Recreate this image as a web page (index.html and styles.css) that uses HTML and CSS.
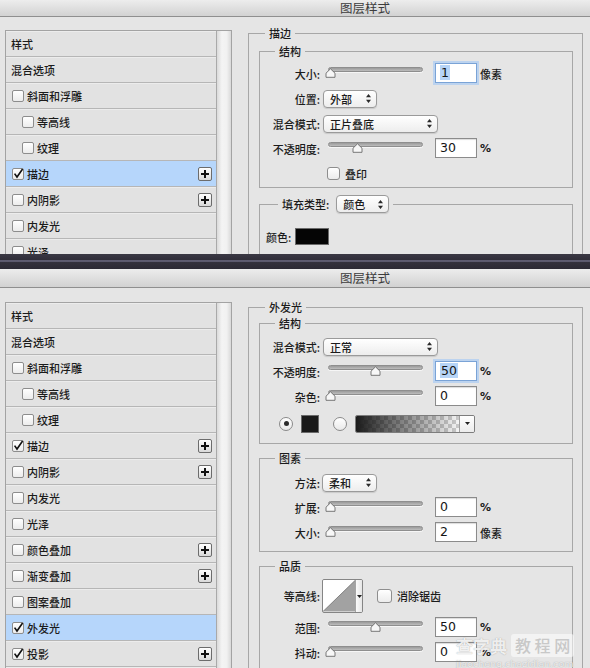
FILE: index.html
```html
<!DOCTYPE html>
<html lang="zh">
<head>
<meta charset="utf-8">
<title>图层样式</title>
<link rel="stylesheet" href="styles.css">
</head>
<body>
<div class="dialog d1">
  <div class="titlebar">图层样式</div>
  <div class="dbody">
    <div class="list">
      <div class="rows">
        <div class="row">样式</div>
        <div class="row">混合选项</div>
        <div class="row"><i class="cb"></i>斜面和浮雕</div>
        <div class="row sub"><i class="cb"></i>等高线</div>
        <div class="row sub"><i class="cb"></i>纹理</div>
        <div class="row active"><i class="cb on"><svg viewBox="0 0 12 12"><path d="M2.6 5.6l2.4 3.4L10.6 1"/></svg></i>描边<i class="plus"><svg viewBox="0 0 12 12"><path d="M6 2v8M2 6h8"/></svg></i></div>
        <div class="row"><i class="cb"></i>内阴影<i class="plus"><svg viewBox="0 0 12 12"><path d="M6 2v8M2 6h8"/></svg></i></div>
        <div class="row"><i class="cb"></i>内发光</div>
        <div class="row"><i class="cb"></i>光泽</div>
      </div>
      <div class="track"></div>
    </div>
    <div class="panel p1">
      <fieldset class="grp outer">
        <legend>描边</legend>
        <fieldset class="grp inner">
          <legend>结构</legend>
          <div class="fbody fb-s1">
            <div class="frow">
              <span class="lbl">大小:</span>
              <div class="slider"><div class="trk"></div><svg class="thumb" style="left:-0.5px" viewBox="0 0 11 10"><path d="M1 9.3V5.2L5.5 0.8L10 5.2V9.3Z"/></svg></div>
              <span class="num focus"><span class="hl">1</span></span>
              <span class="unit">像素</span>
            </div>
            <div class="frow">
              <span class="lbl">位置:</span>
              <span class="sel w54"><span>外部</span><svg class="arr" viewBox="0 0 5 9"><path d="M2.5 0L5 3.3H0zM2.5 9L5 5.7H0z"/></svg></span>
            </div>
            <div class="frow">
              <span class="lbl">混合模式:</span>
              <span class="sel w115"><span>正片叠底</span><svg class="arr" viewBox="0 0 5 9"><path d="M2.5 0L5 3.3H0zM2.5 9L5 5.7H0z"/></svg></span>
            </div>
            <div class="frow">
              <span class="lbl">不透明度:</span>
              <div class="slider"><div class="trk"></div><svg class="thumb" style="left:26.8px" viewBox="0 0 11 10"><path d="M1 9.3V5.2L5.5 0.8L10 5.2V9.3Z"/></svg></div>
              <span class="num">30</span>
              <span class="pct">%</span>
            </div>
            <div class="frow">
              <span class="lbl"></span>
              <i class="fcb"></i>
              <span class="cbl">叠印</span>
            </div>
          </div>
        </fieldset>
        <fieldset class="grp inner fill">
          <legend class="lsel"><span>填充类型:</span><span class="sel w53"><span>颜色</span><svg class="arr" viewBox="0 0 5 9"><path d="M2.5 0L5 3.3H0zM2.5 9L5 5.7H0z"/></svg></span></legend>
          <div class="fbody fb-fill">
            <div class="frow crow">
              <span>颜色:</span>
              <i class="swatch big"></i>
            </div>
          </div>
        </fieldset>
      </fieldset>
    </div>
  </div>
</div>

<div class="sep"></div>

<div class="dialog d2">
  <div class="titlebar">图层样式</div>
  <div class="dbody">
    <div class="list">
      <div class="rows">
        <div class="row">样式</div>
        <div class="row">混合选项</div>
        <div class="row"><i class="cb"></i>斜面和浮雕</div>
        <div class="row sub"><i class="cb"></i>等高线</div>
        <div class="row sub"><i class="cb"></i>纹理</div>
        <div class="row"><i class="cb on"><svg viewBox="0 0 12 12"><path d="M2.6 5.6l2.4 3.4L10.6 1"/></svg></i>描边<i class="plus"><svg viewBox="0 0 12 12"><path d="M6 2v8M2 6h8"/></svg></i></div>
        <div class="row"><i class="cb"></i>内阴影<i class="plus"><svg viewBox="0 0 12 12"><path d="M6 2v8M2 6h8"/></svg></i></div>
        <div class="row"><i class="cb"></i>内发光</div>
        <div class="row"><i class="cb"></i>光泽</div>
        <div class="row"><i class="cb"></i>颜色叠加<i class="plus"><svg viewBox="0 0 12 12"><path d="M6 2v8M2 6h8"/></svg></i></div>
        <div class="row"><i class="cb"></i>渐变叠加<i class="plus"><svg viewBox="0 0 12 12"><path d="M6 2v8M2 6h8"/></svg></i></div>
        <div class="row"><i class="cb"></i>图案叠加</div>
        <div class="row active"><i class="cb on"><svg viewBox="0 0 12 12"><path d="M2.6 5.6l2.4 3.4L10.6 1"/></svg></i>外发光</div>
        <div class="row"><i class="cb on"><svg viewBox="0 0 12 12"><path d="M2.6 5.6l2.4 3.4L10.6 1"/></svg></i>投影<i class="plus"><svg viewBox="0 0 12 12"><path d="M6 2v8M2 6h8"/></svg></i></div>
        <div class="row"></div>
      </div>
      <div class="track"></div>
    </div>
    <div class="panel p2">
      <fieldset class="grp outer">
        <legend>外发光</legend>
        <fieldset class="grp inner">
          <legend>结构</legend>
          <div class="fbody fb-s2">
            <div class="frow">
              <span class="lbl">混合模式:</span>
              <span class="sel w115"><span>正常</span><svg class="arr" viewBox="0 0 5 9"><path d="M2.5 0L5 3.3H0zM2.5 9L5 5.7H0z"/></svg></span>
            </div>
            <div class="frow">
              <span class="lbl">不透明度:</span>
              <div class="slider"><div class="trk"></div><svg class="thumb" style="left:45px" viewBox="0 0 11 10"><path d="M1 9.3V5.2L5.5 0.8L10 5.2V9.3Z"/></svg></div>
              <span class="num focus"><span class="hl">50</span></span>
              <span class="pct">%</span>
            </div>
            <div class="frow">
              <span class="lbl">杂色:</span>
              <div class="slider"><div class="trk"></div><svg class="thumb" style="left:-0.5px" viewBox="0 0 11 10"><path d="M1 9.3V5.2L5.5 0.8L10 5.2V9.3Z"/></svg></div>
              <span class="num">0</span>
              <span class="pct">%</span>
            </div>
            <div class="frow rrow">
              <i class="radio on"></i>
              <i class="swatch small"></i>
              <i class="radio r2"></i>
              <span class="grad"><span class="gfill"></span><span class="gdrop"><svg viewBox="0 0 5 3"><path d="M0 0h5L2.5 3z"/></svg></span></span>
            </div>
          </div>
        </fieldset>
        <fieldset class="grp inner gap6">
          <legend>图素</legend>
          <div class="fbody fb-e">
            <div class="frow">
              <span class="lbl">方法:</span>
              <span class="sel w55 m2"><span>柔和</span><svg class="arr" viewBox="0 0 5 9"><path d="M2.5 0L5 3.3H0zM2.5 9L5 5.7H0z"/></svg></span>
            </div>
            <div class="frow">
              <span class="lbl">扩展:</span>
              <div class="slider"><div class="trk"></div><svg class="thumb" style="left:-0.5px" viewBox="0 0 11 10"><path d="M1 9.3V5.2L5.5 0.8L10 5.2V9.3Z"/></svg></div>
              <span class="num">0</span>
              <span class="pct">%</span>
            </div>
            <div class="frow">
              <span class="lbl">大小:</span>
              <div class="slider"><div class="trk"></div><svg class="thumb" style="left:-0.5px" viewBox="0 0 11 10"><path d="M1 9.3V5.2L5.5 0.8L10 5.2V9.3Z"/></svg></div>
              <span class="num">2</span>
              <span class="unit">像素</span>
            </div>
          </div>
        </fieldset>
        <fieldset class="grp inner gap6 tall">
          <legend>品质</legend>
          <div class="fbody fb-q">
            <div class="frow krow">
              <span class="lbl">等高线:</span>
              <span class="contour">
                <svg class="cimg" viewBox="0 0 33 32"><rect width="33" height="32" fill="#fff"/><path d="M0 32L33 0V32Z" fill="#a2a2a2"/><path d="M0 32L33 0" stroke="#6d6d6d" stroke-width="0.8"/></svg>
                <span class="cdrop"><svg viewBox="0 0 5 3"><path d="M0 0h5L2.5 3z"/></svg></span>
              </span>
              <i class="fcb big"></i>
              <span class="cbl">消除锯齿</span>
            </div>
            <div class="frow">
              <span class="lbl">范围:</span>
              <div class="slider"><div class="trk"></div><svg class="thumb" style="left:45px" viewBox="0 0 11 10"><path d="M1 9.3V5.2L5.5 0.8L10 5.2V9.3Z"/></svg></div>
              <span class="num">50</span>
              <span class="pct">%</span>
            </div>
            <div class="frow">
              <span class="lbl">抖动:</span>
              <div class="slider"><div class="trk"></div><svg class="thumb" style="left:-0.5px" viewBox="0 0 11 10"><path d="M1 9.3V5.2L5.5 0.8L10 5.2V9.3Z"/></svg></div>
              <span class="num">0</span>
              <span class="pct">%</span>
            </div>
          </div>
        </fieldset>
      </fieldset>
    </div>
  </div>
</div>

<div class="watermark">
  <div class="wm-top"><span class="wm-a">查字典</span><span class="wm-b">教 程 网</span></div>
  <div class="wm-url">jiaocheng.chazidian.com</div>
</div>
</body>
</html>
```

FILE: styles.css
```css
* { box-sizing: border-box; margin: 0; padding: 0; }
html, body { width: 590px; height: 668px; overflow: hidden; }
body {
  position: relative;
  background: #e5e5e5;
  font-family: "Noto Sans CJK SC", "Noto Sans", sans-serif;
  font-size: 11px;
  font-weight: 500;
  color: #1b1b1b;
}
i { display: block; font-style: normal; }

.dialog { overflow: hidden; background: #e5e5e5; }
.d1 { height: 254px; }
.d2 { height: 399px; }
.d1 .titlebar { height: 17px; line-height: 15px; }

.sep {
  height: 15px;
  background: linear-gradient(#3a3844 0, #302e39 6px, #5f5d72 6px, #5b596d 8px, #34323d 8px, #2c2a34 100%);
}

.titlebar {
  height: 19px;
  border-bottom: 1px solid #8f8f8f;
  background: linear-gradient(#ededed, #d2d2d2);
  padding-left: 340px;
  font-size: 12.5px;
  font-weight: 400;
  line-height: 18px;
  color: #3c3c3c;
}

.dbody { display: flex; align-items: flex-start; }

/* left style list */
.list {
  display: flex;
  width: 227px;
  margin-left: 5px;
  border: 1px solid #a3a3a3;
  border-bottom: none;
}
.d1 .list { margin-top: 13px; }
.d2 .list { margin-top: 14px; }
.rows { width: 211px; border-right: 1px solid #a9a9a9; }
.track {
  flex: 1;
  background: linear-gradient(to right, #dadada, #f4f4f4 35%, #f1f1f1 70%, #d9d9d9);
}
.row {
  height: 26px;
  display: flex;
  align-items: center;
  padding-left: 5px;
  padding-right: 4px;
  background: #e2e2e2;
  border-bottom: 1px solid #b6b6b6;
  box-shadow: inset 0 1px 0 #ececec;
  white-space: nowrap;
}
.row.active { background: #b6d6fb; box-shadow: none; }
.row .cb { margin-left: 1px; }
.row.sub { padding-left: 15px; }

.cb {
  position: relative;
  width: 12px;
  height: 12px;
  margin-right: 3px;
  border: 1px solid #8d8d8d;
  border-radius: 2px;
  background: linear-gradient(#ffffff, #ececec);
}
.cb svg {
  position: absolute;
  left: -1px;
  top: -1px;
  width: 12px;
  height: 12px;
  overflow: visible;
  fill: none;
  stroke: #111;
  stroke-width: 1.6;
}
.plus {
  margin-left: auto;
  width: 14px;
  height: 14px;
  border: 1px solid #6c6c6c;
  border-radius: 2px;
  background: linear-gradient(#ffffff, #d9d9d9);
}
.plus svg { display: block; width: 12px; height: 12px; fill: none; stroke: #111; stroke-width: 2; }

/* right panel */
.panel { width: 335px; margin-left: 16px; }
.p1 { margin-top: 8px; }
.p2 { margin-top: 11px; }

.grp {
  min-width: 0;
  padding: 0;
  border: 1px solid #a7a7a7;
}
.grp > legend {
  font-size: 11px;
  line-height: 16px;
  padding: 0 4px;
  margin-left: 15px;
}
.outer { height: 700px; }
.outer > legend { margin-left: 16px; }
.inner { margin: 0 9px 0 10px; }
.p1 .inner:first-of-type { margin-top: 2px; }
.gap6 { margin-top: 6px; }
.fill { margin-top: 7px; height: 300px; }
.tall { height: 300px; }

.lsel {
  display: flex;
  align-items: center;
  margin-left: 18px !important;
  line-height: 18px !important;
}
.lsel .sel { margin-left: 7px; }

.fb-s1 { padding: 2px 0 1px; }
.fb-fill { padding-top: 11px; }
.fb-s2 { padding: 3px 0 5px; }
.fb-e { padding: 4px 0 6px; }
.fb-q { padding-top: 3px; }

.frow { display: flex; align-items: center; height: 25px; white-space: nowrap; }
.lbl { width: 60px; flex: none; text-align: right; }

.sel {
  display: flex;
  align-items: center;
  justify-content: space-between;
  height: 18px;
  margin-left: 3px;
  padding: 0 5px 0 6px;
  border: 1px solid #9a9a9a;
  border-radius: 4px;
  background: linear-gradient(#ffffff, #ededed);
  box-shadow: 0 1px 1px rgba(0, 0, 0, 0.12);
}
.sel.m2 { margin-left: 2px; }
.w53 { width: 53px; }
.w54 { width: 54px; }
.w55 { width: 55px; }
.w115 { width: 115px; }
.arr { width: 5px; height: 9px; fill: #2a2a2a; }

.slider {
  position: relative;
  align-self: flex-start;
  width: 101px;
  height: 18px;
  margin-top: 5px;
  margin-left: 5px;
}
.trk {
  height: 5px;
  margin: 1px 3px 0;
  border-radius: 3px;
  border: 1px solid #8e8e8e;
  background: linear-gradient(#9a9a9a, #bdbdbd);
  box-shadow: 0 1px 0 #f6f6f6;
}
.thumb {
  position: absolute;
  top: 2px;
  width: 11px;
  height: 10px;
  fill: #f7f7f7;
  stroke: #6a6a6a;
  stroke-width: 0.9;
}

.num {
  align-self: flex-start;
  width: 42px;
  height: 20px;
  margin-top: 2px;
  margin-left: 9px;
  padding-left: 4px;
  background: #fff;
  border: 1px solid #8b8b8b;
  box-shadow: inset 0 1px 1px rgba(0, 0, 0, 0.14);
  font-family: "DejaVu Sans", sans-serif;
  font-weight: 400;
  font-size: 12.5px;
  line-height: 18px;
  color: #141414;
}
.num.focus {
  border-color: #7aa3d6;
  box-shadow: 0 0 0 2px #bcd3ef;
}
.hl { background: #b6d4f7; padding: 0 1px; }
.unit { margin-left: 3px; }
.pct {
  margin-left: 3px;
  font-family: "DejaVu Sans", sans-serif;
  font-weight: bold;
  font-size: 11px;
}

.fcb {
  width: 13px;
  height: 13px;
  margin-left: 7px;
  border: 1px solid #8e8e8e;
  border-radius: 3px;
  background: linear-gradient(#ffffff, #ececec);
}
.fcb.big { width: 15px; height: 14px; margin-left: 14px; }
.cbl { margin-left: 5px; }

.crow { padding-left: 6px; }
.swatch { background: #050505; border: 1px solid #6a6a6a; }
.swatch.big { width: 34px; height: 17px; margin-left: 4px; }
.swatch.small { width: 18px; height: 18px; margin-left: 8px; background: #1a1a1a; }

.rrow { height: 29px; }
.radio {
  width: 14px;
  height: 14px;
  margin-left: 19px;
  border: 1px solid #8a8a8a;
  border-radius: 50%;
  background: linear-gradient(#ffffff, #e9e9e9);
  display: flex;
  align-items: center;
  justify-content: center;
}
.radio.on::after {
  content: "";
  width: 5px;
  height: 5px;
  border-radius: 50%;
  background: #2c2c2c;
}
.radio.r2 { margin-left: 14px; }

.grad {
  display: flex;
  width: 120px;
  height: 18px;
  margin-left: 8px;
  border: 1px solid #7d7d7d;
  border-radius: 2px;
  overflow: hidden;
}
.gfill {
  flex: 1;
  background:
    linear-gradient(to right, #1b1b1b, rgba(0, 0, 0, 0.55) 35%, rgba(0, 0, 0, 0) 100%),
    conic-gradient(#c9c9c9 25%, #f4f4f4 0 50%, #c9c9c9 0 75%, #f4f4f4 0) 0 0 / 8px 8px;
}
.gdrop {
  width: 15px;
  display: flex;
  align-items: center;
  justify-content: center;
  border-left: 1px solid #a0a0a0;
  background: linear-gradient(#ffffff, #ececec);
}
.gdrop svg, .cdrop svg { width: 5px; height: 3px; fill: #222; }

.krow { height: 38px; }
.contour {
  display: flex;
  width: 41px;
  height: 34px;
  margin-left: 2px;
  border: 1px solid #858585;
  border-radius: 2px;
  overflow: hidden;
  background: #fff;
}
.cimg { width: 32px; height: 32px; display: block; }
.cdrop {
  flex: 1;
  display: flex;
  align-items: center;
  justify-content: center;
  border-left: 1px solid #a5a5a5;
  background: linear-gradient(to right, #fafafa, #e6e6e6);
}

/* watermark overlay */
.watermark {
  position: absolute;
  left: 456px;
  top: 633px;
  width: 126px;
  color: rgba(255, 255, 255, 0.85);
  text-shadow: 0 0 1px rgba(90, 90, 90, 0.6);
  pointer-events: none;
}
.wm-top { display: flex; align-items: center; height: 25px; }
.wm-a { font-size: 17px; font-weight: bold; }
.wm-b {
  margin-left: 4px;
  padding: 0 4px;
  font-size: 16px;
  line-height: 23px;
  color: #c8c8c8;
  background: rgba(255, 255, 255, 0.55);
  border-radius: 3px;
  text-shadow: none;
}
.wm-url {
  font-family: "DejaVu Sans", sans-serif;
  font-weight: 400;
  font-size: 9.5px;
  line-height: 11px;
  color: rgba(255, 255, 255, 0.8);
}
```
